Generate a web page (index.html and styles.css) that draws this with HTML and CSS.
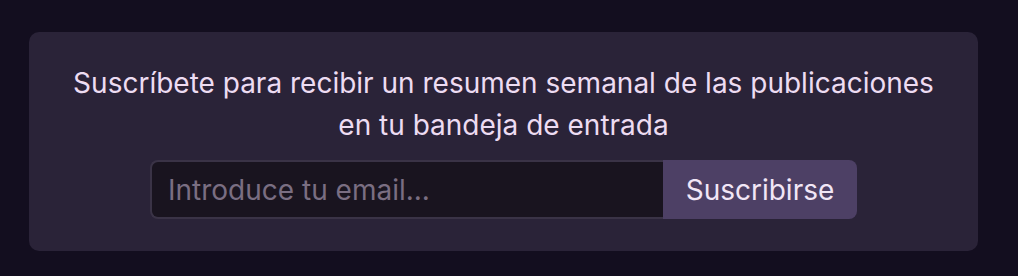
FILE: index.html
```html
<!DOCTYPE html>
<html lang="es">
<head>
<meta charset="utf-8">
<link rel="stylesheet" href="styles.css">
</head>
<body>
<div class="page">
  <section class="card">
    <p class="lead">Suscríbete para recibir un resumen semanal de las publicaciones<br>en tu bandeja de entrada</p>
    <form class="form">
      <input class="email" type="email" placeholder="Introduce tu email...">
      <button class="btn" type="button">Suscribirse</button>
    </form>
  </section>
</div>
</body>
</html>
```

FILE: styles.css
```css
* { box-sizing: border-box; }
html, body { margin: 0; padding: 0; }
body {
  background: #130e1f;
  font-family: Inter, "Noto Sans", sans-serif;
  width: 1018px;
  height: 276px;
}
.page {
  padding: 32px 40px 25px 29px;
}
.card {
  background: #2a2338;
  border-radius: 10px;
  padding: 30px 20px 32px;
  display: flex;
  flex-direction: column;
  align-items: center;
}
.lead {
  margin: 0;
  color: #eddcf2;
  font-size: 28px;
  line-height: 42px;
  text-align: center;
}
.form {
  margin-top: 14px;
  display: flex;
  width: 707px;
  height: 59px;
}
.email {
  flex: 1;
  background: #19141f;
  border: 2px solid #3a3346;
  border-right: none;
  border-radius: 8px 0 0 8px;
  padding: 0 16px;
  font-family: inherit;
  font-size: 28px;
  color: #eddcf2;
  outline: none;
}
.email::placeholder { color: #7a6e82; }
.btn {
  width: 194px;
  background: #4d4065;
  border: none;
  border-radius: 0 8px 8px 0;
  color: #f1e6f6;
  font-family: inherit;
  font-size: 28px;
  padding: 0;
}
```
